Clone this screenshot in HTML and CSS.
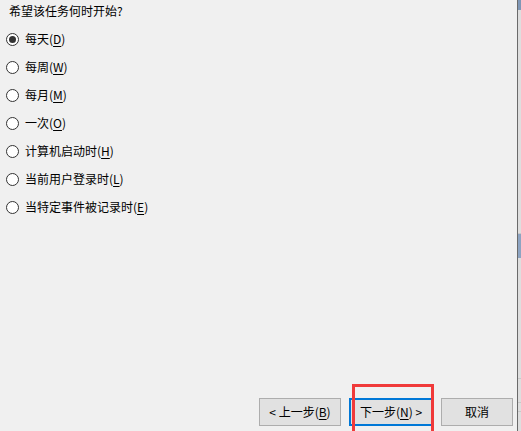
FILE: index.html
```html
<!DOCTYPE html>
<html lang="zh-CN">
<head>
<meta charset="utf-8">
<title>任务触发器</title>
<link rel="stylesheet" href="styles.css">
</head>
<body>
<div class="window">
  <div class="main">
    <p class="question">希望该任务何时开始?</p>
    <div class="options">
      <label class="option"><span class="radio checked"></span><span class="text">每天(<u>D</u>)</span></label>
      <label class="option"><span class="radio"></span><span class="text">每周(<u>W</u>)</span></label>
      <label class="option"><span class="radio"></span><span class="text">每月(<u>M</u>)</span></label>
      <label class="option"><span class="radio"></span><span class="text">一次(<u>O</u>)</span></label>
      <label class="option"><span class="radio"></span><span class="text">计算机启动时(<u>H</u>)</span></label>
      <label class="option"><span class="radio"></span><span class="text">当前用户登录时(<u>L</u>)</span></label>
      <label class="option"><span class="radio"></span><span class="text">当特定事件被记录时(<u>E</u>)</span></label>
    </div>
    <div class="buttons">
      <button class="btn btn-back">&lt; 上一步(<u>B</u>)</button>
      <div class="next-wrap">
        <button class="btn btn-next">下一步(<u>N</u>) &gt;</button>
        <span class="highlight"></span>
      </div>
      <button class="btn btn-cancel">取消</button>
    </div>
  </div>
  <div class="edge">
    <div class="edge-line"></div>
    <div class="edge-strip">
      <div class="seg seg-top"></div>
      <div class="seg seg-gap1"></div>
      <div class="seg seg-blue"></div>
      <div class="seg seg-fill"></div>
    </div>
  </div>
</div>
</body>
</html>
```
FILE: styles.css
```css
* { box-sizing: border-box; }
html, body {
  margin: 0;
  padding: 0;
  background: #f0f0f0;
}
body {
  font-family: "Noto Sans CJK SC", "Noto Sans", sans-serif;
  font-size: 12px;
  color: #000;
}
.window {
  display: flex;
  width: 521px;
  height: 431px;
  overflow: hidden;
}
.main {
  flex: 0 0 516px;
  display: flex;
  flex-direction: column;
  background: #f0f0f0;
}
.question {
  margin: 0;
  padding: 1px 0 0 9px;
  line-height: 20px;
  height: 21px;
}
.options {
  display: flex;
  flex-direction: column;
  margin-top: 4px;
}
.option {
  display: flex;
  align-items: center;
  height: 28px;
  padding-left: 6px;
}
.radio {
  width: 13px;
  height: 13px;
  border: 1px solid #333;
  border-radius: 50%;
  background: #fff;
  display: flex;
  align-items: center;
  justify-content: center;
  margin-right: 6px;
}
.radio.checked::after {
  content: "";
  width: 7px;
  height: 7px;
  border-radius: 50%;
  background: #333;
}
.text {
  line-height: 16px;
}
u { text-decoration: underline; text-underline-offset: 2px; }
.buttons {
  margin-top: auto;
  display: flex;
  align-items: flex-end;
  padding: 0 4px 5px 259px;
}
.btn {
  font-family: inherit;
  font-size: 12px;
  color: #000;
  height: 28px;
  background: #e1e1e1;
  border: 1px solid #adadad;
  padding: 0;
  margin: 0;
  line-height: 16px;
}
.btn-back { width: 82px; }
.next-wrap {
  position: relative;
  margin-left: 8px;
}
.btn-next {
  width: 84px;
  border: 2px solid #0078d7;
  display: block;
}
.highlight {
  position: absolute;
  left: 3px;
  top: -14px;
  width: 82px;
  height: 52px;
  border: 3px solid #f03a3a;
  pointer-events: none;
}
.btn-cancel {
  width: 72px;
  margin-left: 8px;
}
.edge {
  flex: 1;
  display: flex;
}
.edge-line {
  width: 1px;
  background: #6a6a6a;
}
.edge-strip {
  flex: 1;
  display: flex;
  flex-direction: column;
  background: #dcdcdc;
}
.seg-top { height: 10px; background: #7f97b6; }
.seg-gap1 { height: 224px; background: #dedede; border-bottom: 1px solid #c8c8c8; }
.seg-blue { height: 24px; background: #8da4c2; }
.seg-fill {
  flex: 1;
  background: linear-gradient(#dedede 0 120px, #c8c8c8 120px 121px, #dedede 121px 144px, #c8c8c8 144px 145px, #dedede 145px 153px, #c8c8c8 153px 154px, #dedede 154px);
}
```
